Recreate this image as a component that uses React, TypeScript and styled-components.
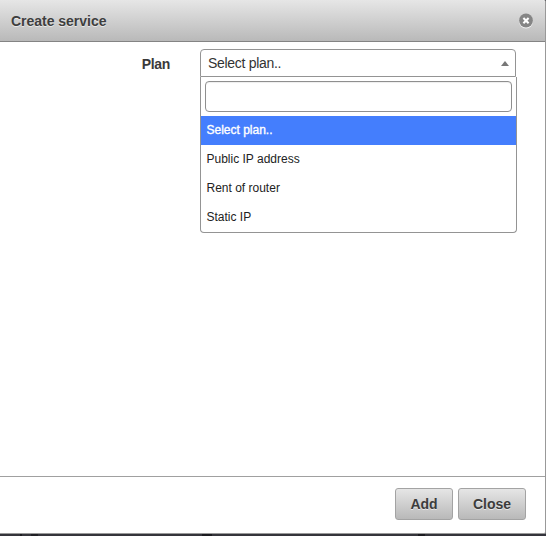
import React, { useState } from "react";
import styled, { createGlobalStyle } from "styled-components";

const GlobalStyle = createGlobalStyle`
  *, *::before, *::after { box-sizing: border-box; }
  body {
    margin: 0;
    overflow: hidden;
    background: #34343b;
    font-family: "Liberation Sans", Arial, Helvetica, sans-serif;
  }
`;

const Page = styled.div`
  height: 536px;
  width: 546px;
  display: flex;
  flex-direction: column;
`;

const Dialog = styled.section`
  height: 534px;
  display: flex;
  flex-direction: column;
  background: #fff;
  border-right: 1px solid #999;
  border-bottom: 1px solid #999;
  border-radius: 0 2px 2px 0;
`;

const Backdrop = styled.div`
  height: 2px;
  background: linear-gradient(
    90deg,
    transparent 20px, #1b1b20 20px 22px,
    transparent 22px 31px, #202025 31px 38px,
    transparent 38px 202px, #1b1b20 202px 212px,
    transparent 212px 418px, #1b1b20 418px 425px,
    transparent 425px
  );
`;

const Header = styled.header`
  height: 42px;
  flex: none;
  display: flex;
  align-items: center;
  justify-content: space-between;
  padding: 0 12px 0 11px;
  background: linear-gradient(#e6e6e6, #b9b9b9);
  border-bottom: 1px solid #848484;
  border-radius: 0 2px 0 0;
`;

const Title = styled.h1`
  margin: 0;
  font-size: 14px;
  line-height: 16px;
  letter-spacing: -0.02px;
  color: #3e3e3e;
  text-shadow: 0 1px 0 rgba(255, 255, 255, 0.6);
`;

const IconButton = styled.button`
  width: 15px;
  height: 16px;
  padding: 0;
  border: 0;
  background: none;
  display: flex;
`;

const Body = styled.main`
  flex: 1;
  display: flex;
  align-items: flex-start;
  padding: 7px 0 0;
`;

const Label = styled.label`
  width: 170px;
  margin-right: 30px;
  text-align: right;
  font-size: 14px;
  font-weight: bold;
  line-height: 30px;
  letter-spacing: -0.35px;
  color: #3a3a3a;
`;

const Field = styled.div`
  width: 317px;
`;

const Selection = styled.div`
  width: 316px;
  height: 28px;
  display: flex;
  align-items: center;
  justify-content: space-between;
  padding: 0 6px 0 7px;
  border: 1px solid #949494;
  border-radius: 4px 4px 0 0;
  font-size: 14px;
  letter-spacing: -0.3px;
  color: #333;
`;

const Dropdown = styled.div`
  height: 156px;
  border: 1px solid #949494;
  border-top: 0;
  border-radius: 0 0 4px 4px;
`;

const SearchRow = styled.div`
  padding: 4px;
  height: 39px;
`;

const Search = styled.input`
  display: block;
  width: 307px;
  height: 31px;
  border: 1px solid #8f8f8f;
  border-radius: 4px;
  padding: 4px;
  outline: none;
  box-shadow: inset 0 1px 1px #eee;
`;

const Options = styled.ul`
  margin: 0;
  padding: 0;
  list-style: none;
`;

const Option = styled.li<{ $active: boolean }>`
  height: 29px;
  padding: 0 5.5px;
  font-size: 12px;
  line-height: 28px;
  color: ${(p) => (p.$active ? "#fff" : "#222")};
  background: ${(p) => (p.$active ? "#447efd" : "transparent")};
  -webkit-text-stroke: ${(p) => (p.$active ? "0.35px #fff" : "0")};
`;

const Footer = styled.footer`
  flex: none;
  height: 57px;
  display: flex;
  justify-content: flex-end;
  gap: 5px;
  padding: 11px 19px 0 0;
  border-top: 1px solid #a0a0a0;
`;

const Button = styled.button<{ $width: number }>`
  width: ${(p) => p.$width}px;
  height: 32px;
  padding: 0;
  border: 1px solid #a3a3a3;
  border-radius: 3px;
  background: linear-gradient(#e6e6e6, #b9b9b9);
  font: bold 14px/30px "Liberation Sans", Arial, sans-serif;
  color: #3c3c3c;
  text-shadow: 0 1px 0 rgba(255, 255, 255, 0.6);
`;

const plans = ["Select plan..", "Public IP address", "Rent of router", "Static IP"];

function CloseIcon() {
  return (
    <svg width="15" height="16" viewBox="0 0 15 16">
      <circle cx="8" cy="8.5" r="7" fill="#f2f2f2" />
      <circle cx="8" cy="7.5" r="6.9" fill="#858585" />
      <path d="M5.4 5l5.2 5.2M10.6 5l-5.2 5.2" stroke="#fff" strokeWidth="2.1" />
    </svg>
  );
}

function ArrowUp() {
  return (
    <svg width="8" height="5" viewBox="0 0 8 5">
      <path d="M0 5L4 0L8 5Z" fill="#777" />
    </svg>
  );
}

export default function App() {
  const [plan, setPlan] = useState(plans[0]);
  return (
    <Page>
      <GlobalStyle />
      <Dialog>
        <Header>
          <Title>Create service</Title>
          <IconButton aria-label="Close dialog">
            <CloseIcon />
          </IconButton>
        </Header>
        <Body>
          <Label>Plan</Label>
          <Field>
            <Selection>
              {plan}
              <ArrowUp />
            </Selection>
            <Dropdown>
              <SearchRow>
                <Search aria-label="Search plans" />
              </SearchRow>
              <Options>
                {plans.map((name) => (
                  <Option key={name} $active={name === plan} onClick={() => setPlan(name)}>
                    {name}
                  </Option>
                ))}
              </Options>
            </Dropdown>
          </Field>
        </Body>
        <Footer>
          <Button $width={58}>Add</Button>
          <Button $width={68}>Close</Button>
        </Footer>
      </Dialog>
      <Backdrop />
    </Page>
  );
}
